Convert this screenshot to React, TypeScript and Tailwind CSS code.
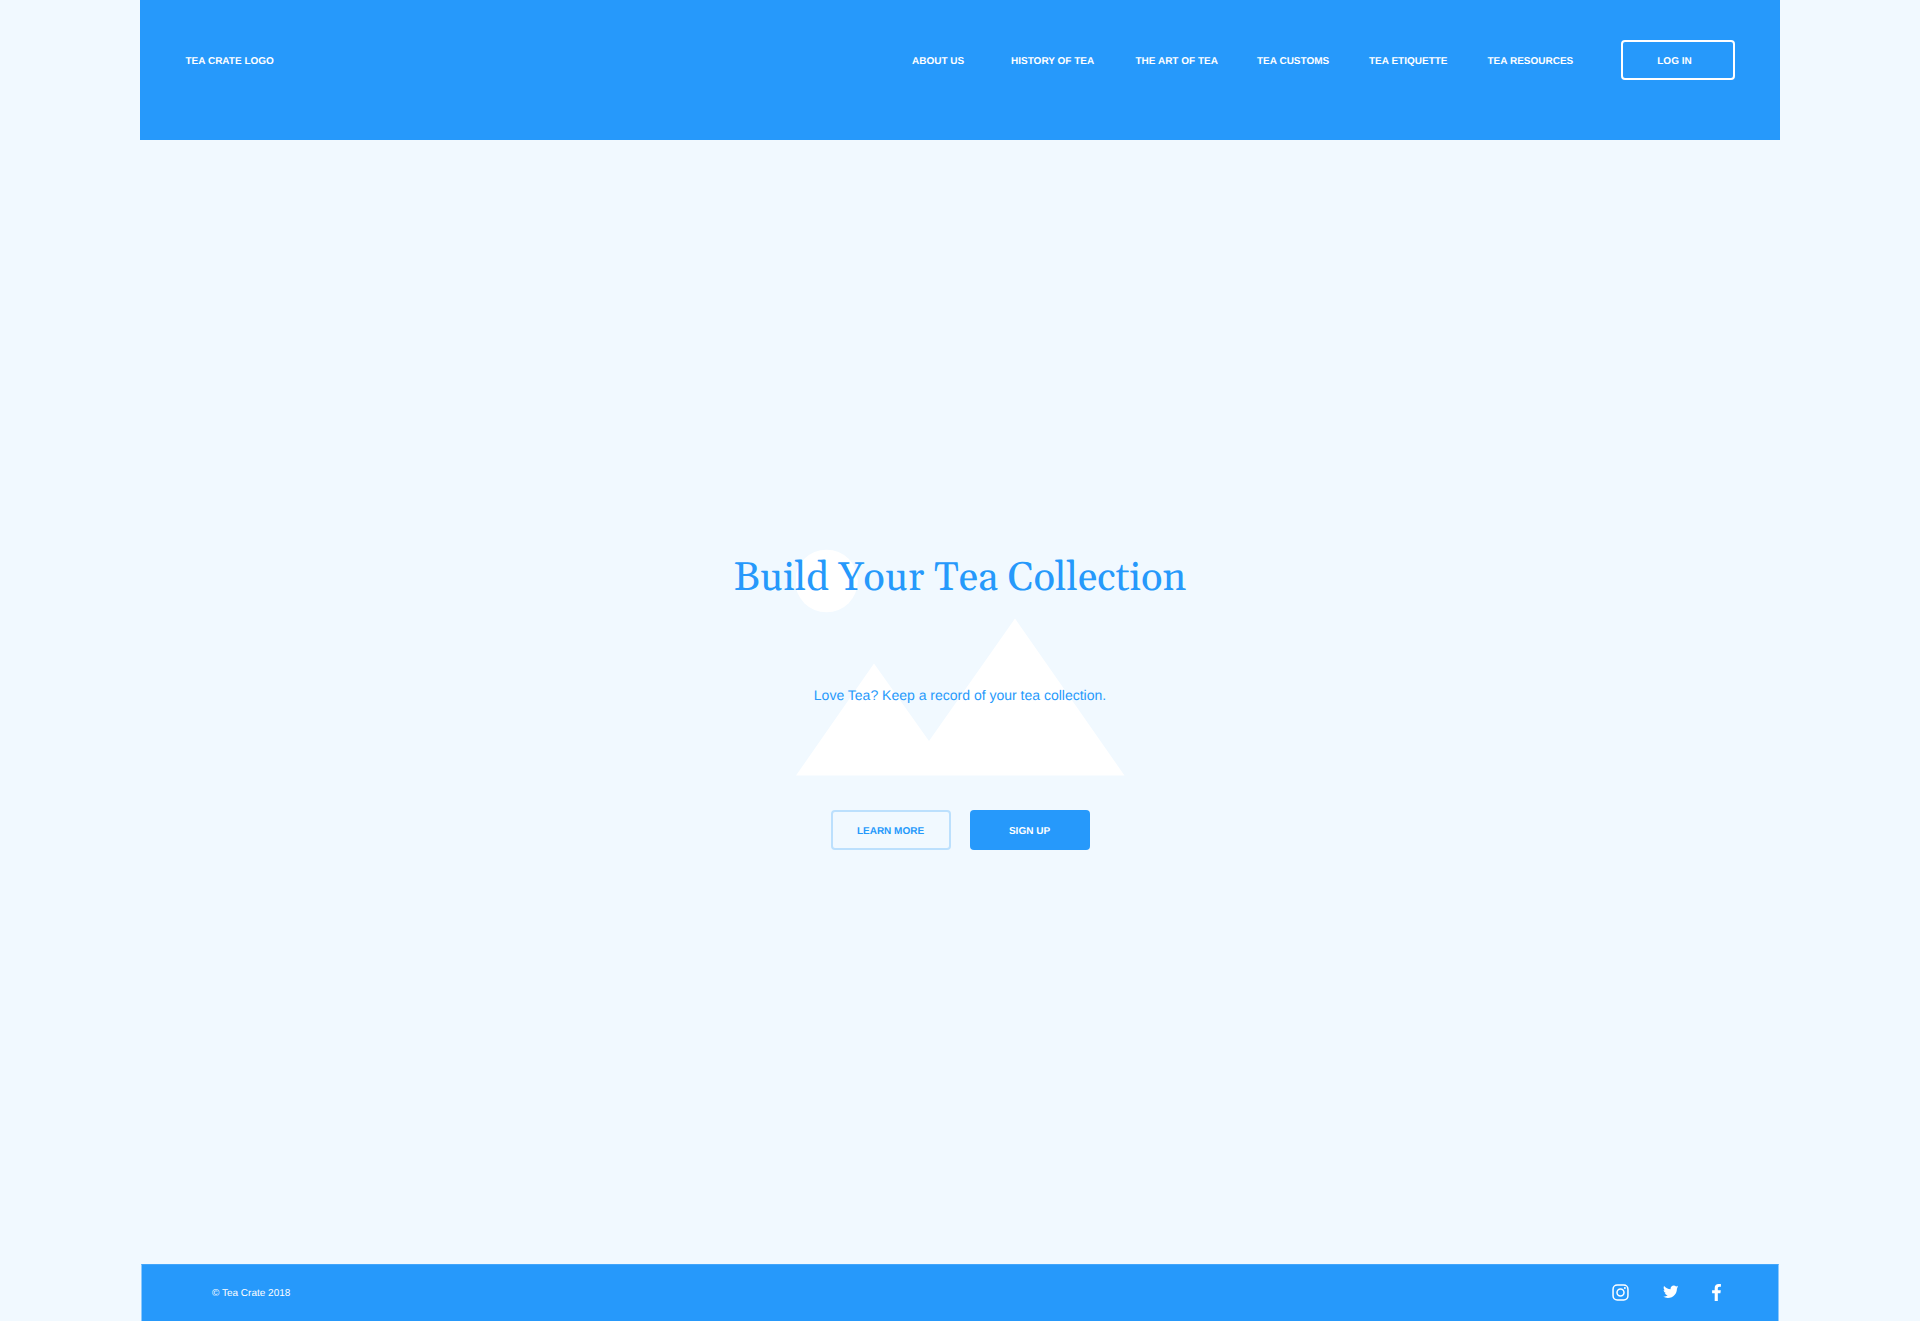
import { FaTwitter } from "react-icons/fa";

const links = [
  { label: "ABOUT US", box: "w-[99px]" },
  { label: "HISTORY OF TEA", box: "w-[124.5px]" },
  { label: "THE ART OF TEA", box: "w-[121.5px]" },
  { label: "TEA CUSTOMS", box: "w-[112px]" },
  { label: "TEA ETIQUETTE", box: "w-[118.5px]" },
  { label: "TEA RESOURCES", box: "w-[133px]" },
];

function Header() {
  return (
    <header className="mx-[140px] flex h-[140px] items-start justify-between bg-[#2699fb] pt-10 pr-[45.5px] pl-[45.5px] text-[10px] font-bold text-white">
      <div className="flex h-10 items-center pt-[2px] whitespace-nowrap">TEA CRATE LOGO</div>
      <nav className="flex h-10 items-center whitespace-nowrap">
        {links.map((l) => (
          <a key={l.label} className={`pt-[2px] ${l.box}`}>{l.label}</a>
        ))}
        <button className="h-10 w-[114px] rounded-[4px] border-2 border-white pt-[2px] pr-[6px] [text-rendering:geometricPrecision]">LOG IN</button>
      </nav>
    </header>
  );
}

function Hero() {
  return (
    <main className="relative flex flex-1 flex-col items-center">
      <svg className="absolute top-[409px] left-[796px]" width="329" height="227" viewBox="0 0 329 227" fill="#fff">
        <circle cx="30.5" cy="32" r="31.3" />
        <path d="M0 226.5 78 114.5 133 192 219 69.5 328.5 226.5Z" />
      </svg>
      <h1 className="relative mt-[415px] h-12 text-[40px] leading-[48px] whitespace-nowrap text-[#2699fb] [font-family:Georgia,Gelasio,'Liberation_Serif',serif]">
        Build Your Tea Collection
      </h1>
      <p className="relative mt-[80px] h-6 text-[14px] leading-6 whitespace-nowrap text-[#2699fb]">
        Love Tea? Keep a record of your tea collection.
      </p>
      <div className="mt-[103px] flex gap-[19px] text-[10px] font-bold">
        <button className="h-10 w-[120px] rounded-[4px] border-2 border-[#bce0fd] pt-[2px] text-[#2699fb] [text-rendering:geometricPrecision]">LEARN MORE</button>
        <button className="h-10 w-[120px] rounded-[4px] bg-[#2699fb] pt-[2px] text-white [text-rendering:geometricPrecision]">SIGN UP</button>
      </div>
    </main>
  );
}

function InstagramIcon() {
  return (
    <svg width="17" height="17" viewBox="0 0 17 17" fill="none" stroke="#fff" strokeWidth="1.5">
      <rect x="1.05" y="1.05" width="14.9" height="14.9" rx="4.2" />
      <circle cx="8.5" cy="8.5" r="3.5" />
      <circle cx="12.9" cy="4.1" r="1" fill="#fff" stroke="none" />
    </svg>
  );
}

function FacebookIcon() {
  return (
    <svg width="9" height="17" viewBox="479 0 864 1664" fill="#fff">
      <path d="M1343 12v264h-157q-86 0-116 36t-30 108v189h293l-39 296h-254v759h-306v-759h-255v-296h255v-218q0-186 104-288.5t277-102.5q147 0 228 12z" />
    </svg>
  );
}

function Footer() {
  return (
    <footer className="mx-[141px] flex h-[57px] items-center justify-between border-x border-t border-x-[#8cc9fd] border-t-[#42a6fb] bg-[#2699fb] pr-[57px] pl-[70px] text-[10px] text-white">
      <span>© Tea Crate 2018</span>
      <div className="flex items-center pb-[2px]">
        <InstagramIcon />
        <FaTwitter className="mr-[34px] ml-[34px] size-[15.5px]" />
        <FacebookIcon />
      </div>
    </footer>
  );
}

export default function App() {
  return (
    <div className="flex h-[1321px] w-[1920px] flex-col overflow-hidden bg-[#f1f9ff] [font-family:'Liberation_Sans',Arial,sans-serif] [text-rendering:geometricPrecision]">
      <Header />
      <Hero />
      <Footer />
    </div>
  );
}
